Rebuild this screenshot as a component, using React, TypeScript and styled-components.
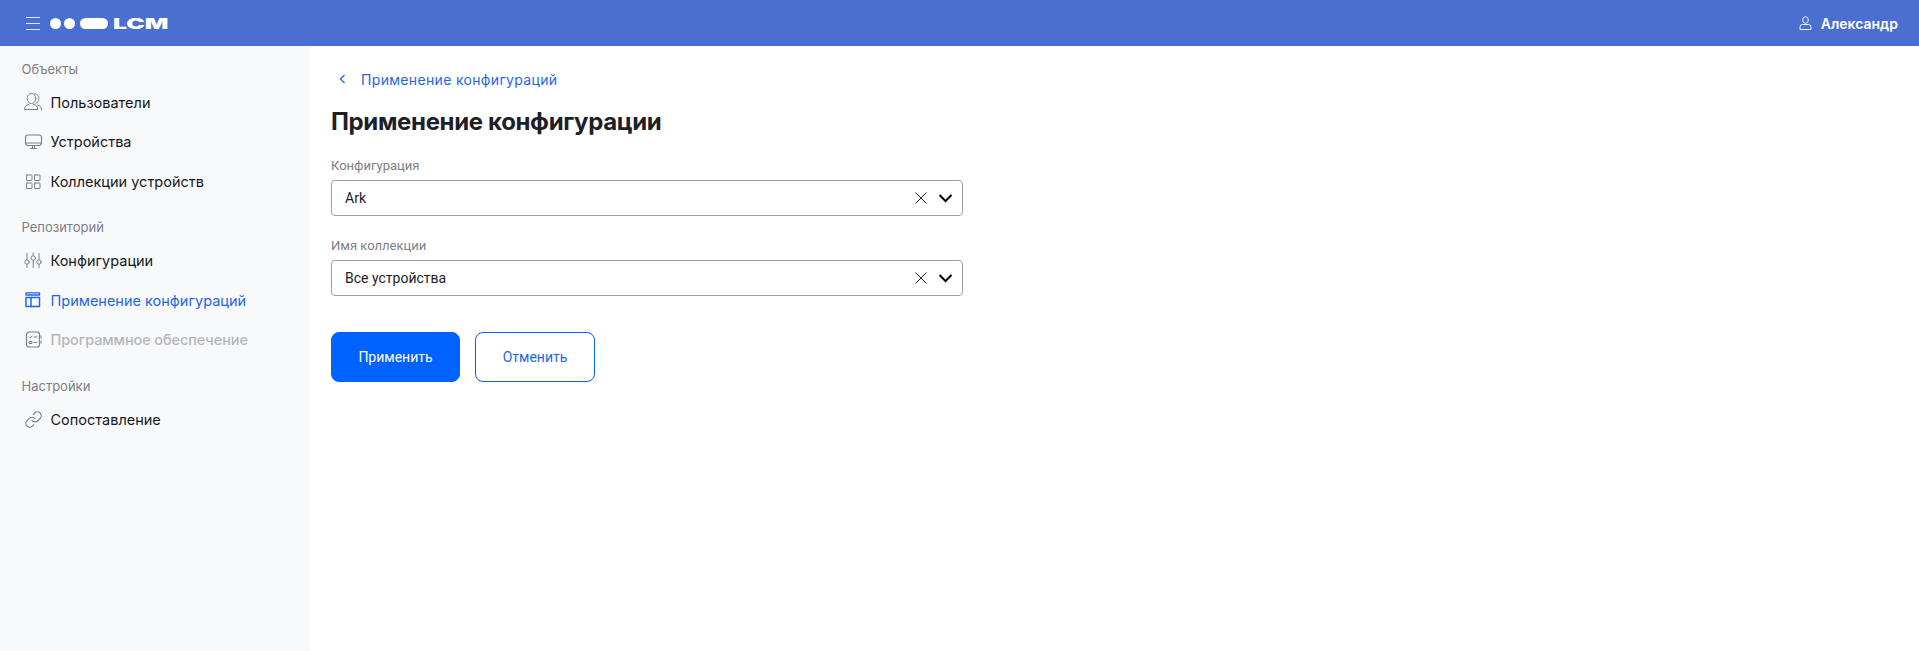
import React from "react";
import styled, { createGlobalStyle } from "styled-components";

const Global = createGlobalStyle`
  html, body { margin: 0; padding: 0; height: 100%; background: #fff; }
  body { font-family: Inter, "Noto Sans", sans-serif; }
  #root { height: 100%; }
`;

const Page = styled.div`
  display: flex;
  flex-direction: column;
  height: 651px;
  overflow: hidden;
`;

const Header = styled.header`
  flex: 0 0 46px;
  height: 46px;
  background: #4a6fd0;
  display: flex;
  align-items: center;
  justify-content: space-between;
  padding: 0 21px 0 26px;
  color: #fff;
`;

const HeaderLeft = styled.div`
  display: flex;
  align-items: center;
  gap: 10px;
`;

const Logo = styled.div`
  display: flex;
  align-items: center;
  gap: 3px;
`;

const Dot = styled.span`
  width: 11px;
  height: 11px;
  border-radius: 50%;
  background: #fff;
`;

const Pill = styled.span`
  width: 28px;
  height: 11px;
  margin-left: 2px;
  border-radius: 6px;
  background: #fff;
`;

const LogoText = styled.span`
  display: inline-block;
  margin-left: 2px;
  width: 56px;
  font-size: 15px;
  line-height: 15px;
  font-weight: 900;
  transform: scaleX(1.65);
  transform-origin: left center;
`;

const UserBox = styled.div`
  display: flex;
  align-items: center;
  gap: 9px;
  font-size: 14px;
  font-weight: 600;
`;

const Body = styled.div`
  flex: 1;
  display: flex;
  min-height: 0;
`;

const Sidebar = styled.nav`
  width: 310px;
  flex: 0 0 310px;
  background: #f8f9fb;
  padding-top: 14.5px;
  box-sizing: border-box;
`;

const Group = styled.div`
  margin-bottom: 18px;
`;

const GroupTitle = styled.div`
  height: 16px;
  line-height: 16px;
  padding-left: 21.5px;
  font-size: 13px;
  color: #7d7f85;
  margin-bottom: 6px;
`;

const Item = styled.div<{ $state?: "active" | "disabled" }>`
  height: 39.5px;
  display: flex;
  align-items: center;
  gap: 7.5px;
  padding-left: 24px;
  font-size: 14.5px;
  color: ${(p) => (p.$state === "active" ? "#2366e8" : p.$state === "disabled" ? "#b4b6ba" : "#15181e")};
  font-weight: ${(p) => (p.$state === "disabled" ? 500 : 400)};
  letter-spacing: ${(p) => (p.$state === "disabled" ? "-0.1px" : "0")};
  svg { flex: 0 0 19px; color: ${(p) => (p.$state === "active" ? "#2366e8" : "#7d7f85")}; }
`;

const Main = styled.main`
  flex: 1;
  padding: 24px 0 0 21px;
`;

const Back = styled.div`
  display: flex;
  align-items: center;
  height: 18px;
  gap: 15px;
  padding-left: 8px;
  font-size: 14px;
  letter-spacing: 0.33px;
  color: #2366e8;
`;

const Title = styled.h1`
  margin: 19px 0 0;
  font-size: 24px;
  line-height: 30px;
  font-weight: 700;
  letter-spacing: -0.35px;
  color: #1d2026;
`;

const Form = styled.div`
  width: 632px;
  margin-top: 21px;
`;

const Field = styled.div`
  margin-bottom: 22px;
`;

const Label = styled.div`
  font-family: Roboto, sans-serif;
  font-size: 13px;
  line-height: 16px;
  color: #7d7f85;
  margin-bottom: 6px;
`;

const Select = styled.div`
  height: 36px;
  box-sizing: border-box;
  border: 1px solid #9a9da3;
  border-radius: 4px;
  display: flex;
  align-items: center;
  justify-content: space-between;
  padding: 0 9px 0 13px;
  font-family: Roboto, sans-serif;
  font-size: 14px;
  color: #1d2026;
`;

const SelectIcons = styled.div`
  display: flex;
  align-items: center;
  gap: 10px;
`;

const Actions = styled.div`
  display: flex;
  gap: 15px;
  margin-top: 36px;
`;

const Button = styled.button<{ $primary?: boolean }>`
  height: 50px;
  box-sizing: border-box;
  width: ${(p) => (p.$primary ? "129px" : "120px")};
  border-radius: 8px;
  border: 1px solid #0062ff;
  background: ${(p) => (p.$primary ? "#0062ff" : "#fff")};
  color: ${(p) => (p.$primary ? "#fff" : "#2366e8")};
  font-family: Roboto, sans-serif;
  font-size: 14px;
  padding: 0 0 1px;
`;

type IP = { children: React.ReactNode };
const Ico = ({ children }: IP) => (
  <svg width="19" height="19" viewBox="0 0 19 19" fill="none" stroke="currentColor" strokeWidth="1" strokeLinecap="round" strokeLinejoin="round">
    {children}
  </svg>
);

const Users = () => (
  <Ico>
    <ellipse cx="7.5" cy="5.5" rx="4.3" ry="5" />
    <path d="M10.5 0.8c3.2 0 4.6 2.4 4.3 5s-1.3 3.9-2.8 4.6" />
    <path d="M5 11.3c-2.8.6-4.5 2-4.5 5.2h13.3c0-3.2-1.7-4.6-4.5-5.2" />
    <path d="M13.5 12c2.6.6 4 2 4 4.5" />
  </Ico>
);
const Monitor = () => (
  <Ico>
    <rect x="1.5" y="3" width="16" height="10.5" rx="2.5" strokeWidth="1.1" />
    <path d="M1.5 11h16M6.5 16.5h6M8.5 13.5v3M10.5 13.5v3" />
  </Ico>
);
const Grid = () => (
  <Ico>
    <rect x="2.5" y="3" width="5.5" height="5.5" rx="0.5" />
    <rect x="10.5" y="3" width="5.5" height="5.5" rx="0.5" />
    <rect x="2.5" y="11" width="5.5" height="5.5" rx="0.5" />
    <rect x="10.5" y="11" width="5.5" height="5.5" rx="0.5" />
  </Ico>
);
const Sliders = () => (
  <Ico>
    <path d="M3 2.5v6M3 13.5v3M9.2 2v2.5M9.2 9.5v7M15 2.5v6M15 13.5v3" />
    <circle cx="3" cy="11" r="2.2" />
    <circle cx="9.2" cy="7" r="2.2" />
    <circle cx="15" cy="11" r="2.2" />
  </Ico>
);
const Layout = () => (
  <Ico>
    <rect x="2" y="1.8" width="13.5" height="2.2" strokeWidth="1.3" />
    <rect x="2" y="6.5" width="13.5" height="9" strokeWidth="1.5" />
    <path d="M7 6.5v9" strokeWidth="1.5" />
  </Ico>
);
const Software = () => (
  <Ico>
    <rect x="2.5" y="2" width="13" height="15" rx="2.5" strokeWidth="1.2" />
    <path d="M5.5 7l1 1 1.5-2M10 7h3M10 12.5h3M17 6v2M17 11v2" />
    <rect x="5.5" y="11.5" width="2.5" height="2" />
  </Ico>
);
const ChainLink = () => (
  <Ico>
    <g transform="translate(.3 .3) scale(.77)" strokeWidth="1.5">
      <path d="M10 13a5 5 0 0 0 7.54.54l3-3a5 5 0 0 0-7.07-7.07l-1.72 1.71" />
      <path d="M14 11a5 5 0 0 0-7.54-.54l-3 3a5 5 0 0 0 7.07 7.07l1.71-1.71" />
    </g>
  </Ico>
);

const ClearIcon = () => (
  <svg width="14" height="14" viewBox="0 0 14 14" stroke="#1d2026" strokeWidth="1"><path d="M1.5 1.5l11 11M12.5 1.5l-11 11" /></svg>
);
const ChevronIcon = () => (
  <svg width="15" height="10" viewBox="0 0 15 10" fill="none" stroke="#000" strokeWidth="2"><path d="M1.5 2l6 6 6-6" /></svg>
);

export default function App() {
  return (
    <Page>
      <Global />
      <Header>
        <HeaderLeft>
          <svg width="14" height="13" viewBox="0 0 14 13" stroke="#fff" strokeOpacity="0.85" strokeWidth="1">
            <path d="M0 .5h14M0 6.5h14M0 12.5h14" />
          </svg>
          <Logo>
            <Dot />
            <Dot />
            <Pill />
            <LogoText>LCM</LogoText>
          </Logo>
        </HeaderLeft>
        <UserBox>
          <svg width="13" height="14" viewBox="0 0 13 14" fill="none" stroke="#fff" strokeOpacity="0.9" strokeWidth="1">
            <ellipse cx="6.5" cy="4" rx="2.8" ry="3.3" />
            <path d="M3.5 8.5h6a2.5 2.5 0 0 1 2.5 2.5v2.5H1V11a2.5 2.5 0 0 1 2.5-2.5z" />
          </svg>
          Александр
        </UserBox>
      </Header>
      <Body>
        <Sidebar>
          <Group>
            <GroupTitle>Объекты</GroupTitle>
            <Item><Users />Пользователи</Item>
            <Item><Monitor />Устройства</Item>
            <Item><Grid />Коллекции устройств</Item>
          </Group>
          <Group>
            <GroupTitle>Репозиторий</GroupTitle>
            <Item><Sliders />Конфигурации</Item>
            <Item $state="active"><Layout />Применение конфигураций</Item>
            <Item $state="disabled"><Software />Программное обеспечение</Item>
          </Group>
          <Group>
            <GroupTitle>Настройки</GroupTitle>
            <Item><ChainLink />Сопоставление</Item>
          </Group>
        </Sidebar>
        <Main>
          <Back>
            <svg width="7" height="10" viewBox="0 0 7 10" fill="none" stroke="#2366e8" strokeWidth="1.3">
              <path d="M5.5 1L1.5 5l4 4" />
            </svg>
            Применение конфигураций
          </Back>
          <Title>Применение конфигурации</Title>
          <Form>
            <Field>
              <Label>Конфигурация</Label>
              <Select>
                Ark
                <SelectIcons><ClearIcon /><ChevronIcon /></SelectIcons>
              </Select>
            </Field>
            <Field>
              <Label>Имя коллекции</Label>
              <Select>
                Все устройства
                <SelectIcons><ClearIcon /><ChevronIcon /></SelectIcons>
              </Select>
            </Field>
          </Form>
          <Actions>
            <Button $primary>Применить</Button>
            <Button>Отменить</Button>
          </Actions>
        </Main>
      </Body>
    </Page>
  );
}
